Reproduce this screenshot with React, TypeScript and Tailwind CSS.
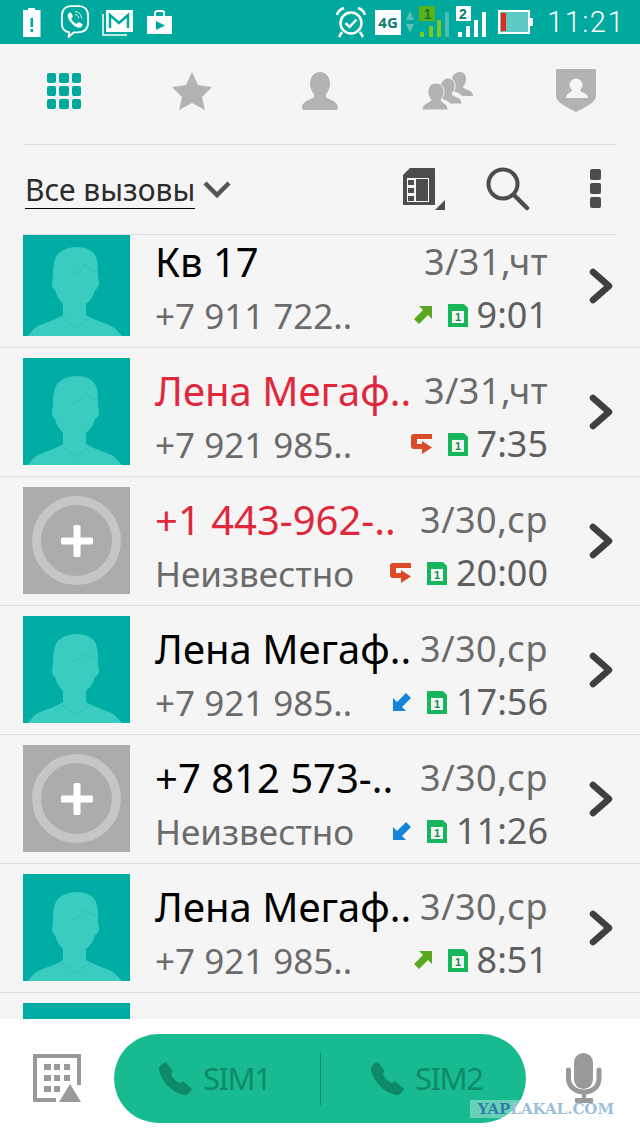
import React from 'react';

const font = "font-['Noto_Sans','Open_Sans',sans-serif]";

function BatteryAlert() {
  return (
    <svg width="20" height="30" viewBox="0 0 20 30" className="ml-[22px]">
      <path d="M6 1h7v2h5.500v27H1V3h5z" fill="#fff" />
      <rect x="8.500" y="11" width="2.600" height="9" fill="#00a99d" />
      <rect x="8.500" y="22" width="2.600" height="3" fill="#00a99d" />
    </svg>
  );
}

function Viber() {
  return (
    <svg width="30" height="36" viewBox="0 0 32 38" className="ml-[18px]" fill="none" stroke="#fff">
      <path d="M10 30c-5-1-8-4-8-9v-8C2 6 6 2 12 2h8c6 0 10 4 10 11v6c0 7-4 11-11 11h-4l-6 5z" strokeWidth="2" strokeLinejoin="round" />
      <path d="M9 10c2-2 3-1 4 1s1 3-1 4c1 3 3 5 6 6 1-2 2-2 4-1s3 2 1 4c-2 2-6 1-10-3s-6-9-4-11z" fill="#fff" stroke="none" />
      <path d="M16 8c4 0 7 3 7 7M16 11c2 0 4 2 4 4" strokeWidth="1" />
    </svg>
  );
}

function Gmail() {
  return (
    <svg width="32" height="27" viewBox="0 0 32 27" className="ml-[12px]" fill="none">
      <path d="M1 5v21h24" stroke="#fff" strokeWidth="1.500" />
      <rect x="4" y="1" width="27" height="22" fill="#fff" />
      <path d="M8 19V6l9 8 9-8v13" stroke="#00a99d" strokeWidth="2.500" />
    </svg>
  );
}

function PlayStore() {
  return (
    <svg width="27" height="25" viewBox="0 0 27 25" className="ml-[12px]">
      <path d="M1 6h7V3c0-2 2-3 3-3h5c2 0 3 1 3 3v3h7v18H1zM10 6h7V3c0-1-1-1-1-1h-5s-1 0-1 1z" fill="#fff" fillRule="evenodd" />
      <path d="M10 11l9 4.500-9 4.500z" fill="#00a99d" />
    </svg>
  );
}

function Alarm() {
  return (
    <svg width="32" height="32" viewBox="0 0 32 32" fill="none" stroke="#fff">
      <circle cx="16" cy="17" r="10.500" strokeWidth="2.500" />
      <path d="M10.500 17l4 4 7-7.500" strokeWidth="2.500" />
      <path d="M2 9c1-4 4-6 7-7M30 9c-1-4-4-6-7-7" strokeWidth="2.500" />
      <path d="M7 26l-3 5M25 26l3 5" strokeWidth="2.500" />
    </svg>
  );
}

function NetBox() {
  return (
    <div className="flex items-center ml-[8px]">
      <div className={`w-[26px] h-[25px] bg-white flex items-center justify-center text-[15px] font-bold text-[#0b7c74] ${font}`}>4G</div>
      <svg width="10" height="24" viewBox="0 0 10 24" className="ml-[4px]">
        <path d="M5 1l4 9H1z" fill="#57c2ba" />
        <path d="M5 23l4-9H1z" fill="#57c2ba" />
      </svg>
    </div>
  );
}

function SignalOne() {
  return (
    <svg width="31" height="32" viewBox="0 0 31 32" className="ml-[4px]">
      <rect x="0" y="0" width="16" height="15" fill="#5cb018" />
      <text x="4.500" y="13" fontSize="14" fontWeight="700" fill="#0e7d3a" fontFamily="Liberation Sans">1</text>
      <rect x="1" y="26" width="4" height="5" fill="#7cc91e" />
      <rect x="10" y="20" width="4" height="11" fill="#7cc91e" />
      <rect x="18" y="14" width="4" height="17" fill="#7cc91e" />
      <rect x="26" y="6" width="4" height="25" fill="#4cbdb5" />
    </svg>
  );
}

function SignalTwo() {
  return (
    <svg width="31" height="32" viewBox="0 0 31 32" className="ml-[6px]">
      <rect x="0" y="0" width="15" height="15" fill="#fff" />
      <text x="3" y="13" fontSize="14" fontWeight="700" fill="#0b7c74" fontFamily="Liberation Sans">2</text>
      <rect x="2" y="26" width="4" height="5" fill="#fff" />
      <rect x="10" y="20" width="4" height="11" fill="#fff" />
      <rect x="18" y="14" width="4" height="17" fill="#fff" />
      <rect x="26" y="6" width="4" height="25" fill="#fff" />
    </svg>
  );
}

function BatteryLow() {
  return (
    <svg width="36" height="24" viewBox="0 0 36 24" className="ml-[11px]">
      <rect x="1" y="1" width="30" height="22" fill="#5ccbc3" stroke="#fff" strokeWidth="2" />
      <rect x="3" y="3" width="5" height="18" fill="#e8261c" />
      <rect x="31" y="8" width="4" height="8" fill="#fff" />
    </svg>
  );
}

function StatusBar() {
  return (
    <div className="h-[44px] bg-[#00a99d] flex items-center shrink-0 text-white">
      <BatteryAlert />
      <Viber />
      <Gmail />
      <PlayStore />
      <div className="flex items-center ml-auto">
        <Alarm />
        <NetBox />
        <SignalOne />
        <SignalTwo />
        <BatteryLow />
        <span className="ml-[13px] mr-[15px] text-[29px] leading-none font-light tracking-[1.5px] font-['Roboto',sans-serif]">11:21</span>
      </div>
    </div>
  );
}

function Person({ className = '' }: { className?: string }) {
  return (
    <svg viewBox="0 0 36 38" className={className} fill="currentColor">
      <path d="M18 0c6 0 10 5 10 12 0 4-2 8-4 10v3c0 2 12 3 12 11 0 1-1 2-2 2H2c-1 0-2-1-2-2 0-8 12-9 12-11v-3c-2-2-4-6-4-10C8 5 12 0 18 0z" />
    </svg>
  );
}

function Tabs() {
  return (
    <div className="h-[100px] shrink-0 grid grid-cols-5 items-center justify-items-center text-[#b3b3b3] pb-[7px]">
      <div className="grid grid-cols-3 gap-[3px] w-[35px]">
        {Array.from({ length: 9 }).map((_, i) => (
          <div key={i} className="w-[9.500px] h-[10px] rounded-[2px] bg-[#00a99d]" />
        ))}
      </div>
      <svg width="40" height="38" viewBox="0 0 40 38" fill="currentColor">
        <path d="M20 0l6 13 14 2-10 10 3 13-13-7-13 7 3-13L0 15l14-2z" />
      </svg>
      <Person className="w-[36px] h-[38px]" />
      <svg width="52" height="38" viewBox="0 0 52 38" fill="currentColor">
        <path d="M38 0c4 0 6 3 6 7s-2 6-3 8c0 2 10 3 10 8 0 1 0 1-1 1H40c-2-4-9-4-9-6 1-4-1-12-1-12 1-3 4-6 8-6z" />
        <path d="M26 6c4 0 7 3 7 8s-2 6-3 8c0 2 10 3 10 9 0 1-1 1-1 1H28c-2-4-9-4-9-7 1-3-1-11-1-11 1-4 4-8 8-8z" stroke="#f5f5f5" />
        <path d="M14 11c5 0 8 4 8 8 0 5-2 7-3 9 0 2 6 3 7 9 0 1 0 1-1 1H1c-1 0-1 0-1-1 1-6 9-7 9-9-1-2-3-4-3-9 0-4 3-8 8-8z" stroke="#f5f5f5" />
      </svg>
      <svg width="40" height="43" viewBox="0 0 40 43">
        <path d="M1 0h38c1 0 1 0 1 1v26c0 5-6 9-20 16C6 36 0 32 0 27V1c0-1 0-1 1-1z" fill="currentColor" />
        <circle cx="20" cy="16" r="6.500" fill="#f5f5f5" />
        <path d="M16 21h8c0 2 7 3 8 7v1H10v-1c1-4 6-5 6-7z" fill="#f5f5f5" />
      </svg>
    </div>
  );
}

function FilterBar() {
  return (
    <div className="mx-[23px] w-[594px] h-[91px] shrink-0 border-t border-b border-[#dcdcdc] flex items-center text-[#4d4d4d] pb-[2px]">
      <span className={`ml-[2px] mt-[4px] text-[30px] leading-[36px] text-[#2b2b2b] border-b border-black ${font}`}>Все вызовы</span>
      <svg width="28" height="18" viewBox="0 0 28 18" className="ml-[8px] mt-[2px]" fill="none" stroke="#555" strokeWidth="4.500">
        <path d="M2 2l12 12L26 2" />
      </svg>
      <svg width="44" height="42" viewBox="0 0 44 42" className="ml-auto">
        <path d="M8 0h24c1 0 1 0 1 1v36H2c-1 0-1 0-1-1V7z" fill="#4d4d4d" />
        <path d="M5 10h22v24H5z" fill="#f5f5f5" />
        <path d="M14 11h12v22H14zM6 12h6v5H6zM6 20h6v5H6zM6 28h6v5H6z" fill="#4d4d4d" />
        <path d="M43 32v10h-10z" fill="#4d4d4d" />
      </svg>
      <svg width="44" height="44" viewBox="0 0 44 44" className="ml-[40px]" fill="none" stroke="#4d4d4d" strokeWidth="4" strokeLinecap="round">
        <circle cx="17" cy="17" r="14.500" />
        <path d="M28 28l13 13" strokeWidth="4.500" />
      </svg>
      <div className="ml-[60px] mr-[16px] flex flex-col gap-[3px]">
        <div className="w-[11px] h-[11px] rounded-[2px] bg-[#4d4d4d]" />
        <div className="w-[11px] h-[11px] rounded-[2px] bg-[#4d4d4d]" />
        <div className="w-[11px] h-[11px] rounded-[2px] bg-[#4d4d4d]" />
      </div>
    </div>
  );
}

function ContactAvatar() {
  return (
    <div className="w-[107px] h-full bg-[#00ada4] shrink-0 flex items-end overflow-hidden">
      <svg width="107" height="107" viewBox="0 0 107 107" className="shrink-0" fill="none">
        <path
          d="M54 18c8 0 15 3 18 8 3 5 3 12 3 20 0 3 1 6 1 9 0 3-2 5-4 6-1 5-4 10-9 14v11c8 5 20 8 27 12 3 2 6 6 9 9H5c3-4 6-8 10-10 7-3 19-7 25-11V75c-4-4-7-9-8-14-2-1-3-3-3-6 0-3 1-6 1-9 0-8 1-15 4-20 4-5 12-8 20-8z"
          fill="#3accc1"
        />
        <path d="M48 46c6-1 11-5 14-11 2 4 6 6 12 7M38 88l15 11 15-11" stroke="#34c0b6" strokeWidth="1" />
      </svg>
    </div>
  );
}

function UnknownAvatar() {
  return (
    <div className="w-[107px] h-full bg-[#acacac] shrink-0 flex items-center justify-center">
      <div className="w-[89px] h-[89px] rounded-full border-[9px] border-[#c6c6c6] flex items-center justify-center">
        <svg width="32" height="32" viewBox="0 0 32 32" fill="#fff">
          <rect x="12.500" y="0" width="7" height="32" rx="1.500" />
          <rect x="0" y="12.500" width="32" height="7" rx="1.500" />
        </svg>
      </div>
    </div>
  );
}

function OutArrow() {
  return (
    <svg width="20" height="20" viewBox="0 0 20 20">
      <path d="M6 1h13v13l-4-4-9 9-5-5 9-9z" fill="#5aa821" />
    </svg>
  );
}

function InArrow() {
  return (
    <svg width="20" height="20" viewBox="0 0 20 20">
      <path d="M14 19H1V6l4 4 9-9 5 5-9 9z" fill="#1583d8" />
    </svg>
  );
}

function MissedArrow() {
  return (
    <svg width="22" height="21" viewBox="0 0 22 21">
      <path d="M21 0v5H6v5h5V7l10 6.500L11 20v-5H3c-2 0-3-1-3-3V3c0-2 1-3 3-3z" fill="#dc4a2a" />
    </svg>
  );
}

function SimBadge() {
  return (
    <svg width="20" height="23" viewBox="0 0 20 23">
      <path d="M1 0h15l4 4v18c0 1 0 1-1 1H1c-1 0-1 0-1-1V1c0-1 0-1 1-1z" fill="#17b65a" />
      <rect x="4" y="7" width="12" height="12" fill="#f5f5f5" />
      <text x="7" y="17" fontSize="11" fontWeight="700" fill="#0f8f47" fontFamily="Liberation Sans">1</text>
    </svg>
  );
}

type CallRowProps = {
  unknown?: boolean;
  name: string;
  nameClass?: string;
  sub: string;
  date: string;
  time: string;
  dir: 'out' | 'in' | 'missed';
  first?: boolean;
};

function CallRow({ unknown, name, nameClass = 'text-black', sub, date, time, dir, first }: CallRowProps) {
  return (
    <div className={`shrink-0 border-b border-[#dcdcdc] flex pl-[23px] ${first ? 'h-[113px] pb-[11px]' : 'h-[129px] pt-[10px] pb-[11px]'}`}>
      {unknown ? <UnknownAvatar /> : <ContactAvatar />}
      <div className={`ml-[25px] w-[393px] flex flex-col justify-end gap-[11px] ${font}`}>
        <div className="flex items-center justify-between h-[42px]">
          <span className={`text-[40px] leading-none whitespace-nowrap ${nameClass}`}>{name}</span>
          <span className="text-[36px] tracking-[0.5px] leading-none text-[#6b6b6b] whitespace-nowrap">{date}</span>
        </div>
        <div className="flex items-center h-[42px]">
          <span className="text-[35px] leading-none text-[#6b6b6b] whitespace-nowrap mr-auto">{sub}</span>
          {dir === 'out' && <OutArrow />}
          {dir === 'in' && <InArrow />}
          {dir === 'missed' && <MissedArrow />}
          <span className="ml-[15px]"><SimBadge /></span>
          <span className="ml-[9px] text-[36px] leading-none text-[#5f5f5f] whitespace-nowrap">{time}</span>
        </div>
      </div>
      <div className="flex items-center ml-[41px]">
        <svg width="24" height="36" viewBox="0 0 24 36" fill="none" stroke="#3f3f3f" strokeWidth="6.500" strokeLinecap="round" strokeLinejoin="round">
          <path d="M4 4l16 14L4 32" />
        </svg>
      </div>
    </div>
  );
}

function PhoneIcon() {
  return (
    <svg width="33" height="33" viewBox="0 0 33 33" fill="#0f8a69">
      <path d="M7 0l6 8c1 1 0 3-1 4 1 3 5 8 9 9 1-1 3-2 4-1l8 7c0 1-4 6-6 6C15 33 0 18 0 6c0-2 5-6 7-6z" />
    </svg>
  );
}

function BottomBar() {
  return (
    <div className="relative h-[119px] shrink-0 bg-white flex items-start pt-[15px] pl-[33px]">
      <svg width="48" height="48" viewBox="0 0 48 48" className="mt-[20px]">
        <path d="M1 0h46c1 0 1 0 1 1v30h-4V4H4v40h19v4H1c-1 0-1 0-1-1V1c0-1 0-1 1-1z" fill="#999" />
        <path d="M11 10h7v6h-7zM21 10h6v6h-6zM31 10h6v6h-6zM11 21h7v6h-7zM21 21h6v6h-6zM31 21h6v6h-6zM11 32h7v6h-7zM21 32h6v6h-6z" fill="#999" />
        <path d="M37 30l11 18H26z" fill="#999" />
      </svg>
      <div className={`ml-[33px] w-[412px] h-[89px] rounded-full bg-[#18bb8f] flex items-center ${font}`}>
        <div className="w-[206px] flex items-center pl-[45px] gap-[11px] text-[31px] text-[#0f8a69]">
          <PhoneIcon />
          <span className="tracking-[-1.5px]">SIM1</span>
        </div>
        <div className="w-px h-[52px] bg-[#0f8a69]" />
        <div className="flex items-center pl-[50px] gap-[11px] text-[31px] text-[#0f8a69]">
          <PhoneIcon />
          <span className="tracking-[-1.5px]">SIM2</span>
        </div>
      </div>
      <svg width="36" height="50" viewBox="0 0 36 50" className="ml-[40px] mt-[19px]" fill="none">
        <rect x="8" y="0" width="19" height="36" rx="9.500" fill="#999" />
        <path d="M2.500 17v8c0 9 7 14 15.500 14S33 34 33 25v-8" stroke="#999" strokeWidth="5" strokeLinecap="round" />
        <path d="M18 39v6" stroke="#999" strokeWidth="4" />
        <rect x="9" y="45" width="18" height="5" rx="1" fill="#999" />
      </svg>
      <div className="absolute left-[470px] top-[81px] w-[144px] h-[18px] flex items-center justify-end text-[15px] leading-none font-bold text-[#9cc0da] font-['DejaVu_Serif',serif] whitespace-nowrap">
        <div className="absolute left-0 top-0 h-full w-[56px] bg-white/35" />
        <span className="relative text-[#2f7fa8]">YAP</span>
        <span className="relative">LAKAL.COM</span>
      </div>
    </div>
  );
}

export default function App() {
  return (
    <div className="w-[640px] h-[1138px] bg-[#f5f5f5] flex flex-col overflow-hidden">
      <StatusBar />
      <Tabs />
      <FilterBar />
      <div className="flex-1 min-h-0 overflow-hidden flex flex-col">
        <CallRow first name="Кв 17" sub="+7 911 722.." date="3/31,чт" time="9:01" dir="out" />
        <CallRow name="Лена Мегаф.." nameClass="text-[#e0283c]" sub="+7 921 985.." date="3/31,чт" time="7:35" dir="missed" />
        <CallRow unknown name="+1 443-962-.." nameClass="text-[#e0283c]" sub="Неизвестно" date="3/30,ср" time="20:00" dir="missed" />
        <CallRow name="Лена Мегаф.." sub="+7 921 985.." date="3/30,ср" time="17:56" dir="in" />
        <CallRow unknown name="+7 812 573-.." sub="Неизвестно" date="3/30,ср" time="11:26" dir="in" />
        <CallRow name="Лена Мегаф.." sub="+7 921 985.." date="3/30,ср" time="8:51" dir="out" />
        <div className="shrink-0 pl-[23px] pt-[10px]">
          <div className="w-[107px] h-[20px] bg-[#00ada4]" />
        </div>
      </div>
      <BottomBar />
    </div>
  );
}
